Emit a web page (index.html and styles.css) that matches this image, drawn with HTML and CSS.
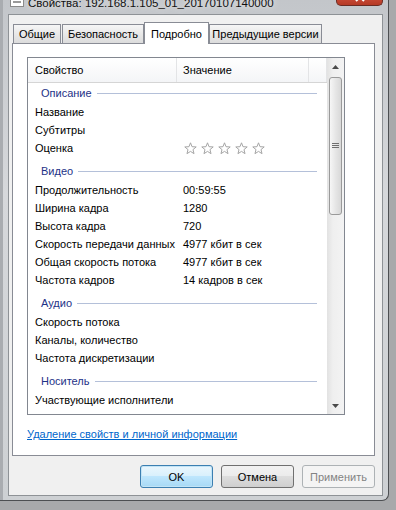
FILE: index.html
```html
<!DOCTYPE html>
<html lang="ru">
<head>
  <meta charset="UTF-8" />
  <title>Свойства</title>
  <link rel="stylesheet" href="styles.css">
</head>
<body>
  <div class="window">
    <div class="titlebar">
      <span class="app-icon">
        <svg width="14" height="16" viewBox="0 0 14 16">
          <rect x="0.5" y="0.5" width="13" height="15" fill="#fff" stroke="#8a8a8a"/>
          <rect x="1" y="1" width="12" height="6" fill="#e8872e"/>
          <rect x="3" y="10" width="8" height="2" fill="#9a9a9a"/>
        </svg>
      </span>
      <span class="title">Свойства: 192.168.1.105_01_20170107140000</span>
      <span class="close-btn">
        <svg width="10" height="9" viewBox="0 0 10 9">
          <path d="M1 0 L9 8 M9 0 L1 8" stroke="#fff" stroke-width="2"/>
        </svg>
      </span>
    </div>

    <div class="dialog">
      <div class="tabs">
        <div class="tab tab-general">Общие</div>
        <div class="tab tab-security">Безопасность</div>
        <div class="tab tab-details active">Подробно</div>
        <div class="tab tab-versions">Предыдущие версии</div>
      </div>

      <div class="panel">
        <div class="list">
          <div class="list-body">
            <div class="list-head">
              <div class="col-name">Свойство</div>
              <div class="col-value">Значение</div>
              <div class="col-rest"></div>
            </div>

            <div class="group">Описание</div>
            <div class="row"><div class="col-name">Название</div><div class="col-value"></div></div>
            <div class="row"><div class="col-name">Субтитры</div><div class="col-value"></div></div>
            <div class="row">
              <div class="col-name">Оценка</div>
              <div class="col-value stars">
                <svg width="13" height="13" viewBox="0 0 13 13"><polygon points="6.5,0.8 8.03,4.7 12.21,4.95 8.97,7.6 10.03,11.65 6.5,9.4 2.97,11.65 4.03,7.6 0.79,4.95 4.97,4.7"/></svg>
                <svg width="13" height="13" viewBox="0 0 13 13"><polygon points="6.5,0.8 8.03,4.7 12.21,4.95 8.97,7.6 10.03,11.65 6.5,9.4 2.97,11.65 4.03,7.6 0.79,4.95 4.97,4.7"/></svg>
                <svg width="13" height="13" viewBox="0 0 13 13"><polygon points="6.5,0.8 8.03,4.7 12.21,4.95 8.97,7.6 10.03,11.65 6.5,9.4 2.97,11.65 4.03,7.6 0.79,4.95 4.97,4.7"/></svg>
                <svg width="13" height="13" viewBox="0 0 13 13"><polygon points="6.5,0.8 8.03,4.7 12.21,4.95 8.97,7.6 10.03,11.65 6.5,9.4 2.97,11.65 4.03,7.6 0.79,4.95 4.97,4.7"/></svg>
                <svg width="13" height="13" viewBox="0 0 13 13"><polygon points="6.5,0.8 8.03,4.7 12.21,4.95 8.97,7.6 10.03,11.65 6.5,9.4 2.97,11.65 4.03,7.6 0.79,4.95 4.97,4.7"/></svg>
              </div>
            </div>

            <div class="group">Видео</div>
            <div class="row"><div class="col-name">Продолжительность</div><div class="col-value">00:59:55</div></div>
            <div class="row"><div class="col-name">Ширина кадра</div><div class="col-value">1280</div></div>
            <div class="row"><div class="col-name">Высота кадра</div><div class="col-value">720</div></div>
            <div class="row"><div class="col-name">Скорость передачи данных</div><div class="col-value">4977 кбит в сек</div></div>
            <div class="row"><div class="col-name">Общая скорость потока</div><div class="col-value">4977 кбит в сек</div></div>
            <div class="row"><div class="col-name">Частота кадров</div><div class="col-value">14 кадров в сек</div></div>

            <div class="group">Аудио</div>
            <div class="row"><div class="col-name">Скорость потока</div><div class="col-value"></div></div>
            <div class="row"><div class="col-name">Каналы, количество</div><div class="col-value"></div></div>
            <div class="row"><div class="col-name">Частота дискретизации</div><div class="col-value"></div></div>

            <div class="group">Носитель</div>
            <div class="row"><div class="col-name">Участвующие исполнители</div><div class="col-value"></div></div>
          </div>

          <div class="scrollbar">
            <div class="sb-arrow">
              <svg width="7" height="4" viewBox="0 0 7 4"><polygon points="3.5,0 7,4 0,4" fill="#4a4a4a"/></svg>
            </div>
            <div class="sb-thumb">
              <svg width="7" height="6" viewBox="0 0 7 6">
                <path d="M0 0.5 H7 M0 2.5 H7 M0 4.5 H7" stroke="#6e6e6e" stroke-width="1"/>
              </svg>
            </div>
            <div class="sb-track"></div>
            <div class="sb-arrow">
              <svg width="7" height="4" viewBox="0 0 7 4"><polygon points="0,0 7,0 3.5,4" fill="#4a4a4a"/></svg>
            </div>
          </div>
        </div>

        <a class="remove-link" href="#">Удаление свойств и личной информации</a>
      </div>

      <div class="buttons">
        <button class="btn btn-default">OK</button>
        <button class="btn">Отмена</button>
        <button class="btn" disabled>Применить</button>
      </div>
    </div>
  </div>
</body>
</html>
```

FILE: styles.css
```css
body {
  margin: 0;
  background: #a8a9ab;
  font-family: "Liberation Sans", Arial, sans-serif;
  font-size: 11px;
  color: #000;
  overflow: hidden;
}

.window {
  width: 375px;
  margin-top: -10px;
  padding: 0 5px 4px 8px;
  border-right: 1px solid #4d4f52;
  border-bottom: 1px solid #4d4f52;
  border-bottom-right-radius: 7px;
  background: linear-gradient(to bottom, #c2c5c9, #d6d8db 40%, #cdd0d3);
  box-shadow: inset 3px 0 0 #a9acb0;
}

/* title bar */
.titlebar {
  height: 24px;
  display: flex;
  align-items: flex-start;
}
.app-icon {
  margin: 1px 0 0 2px;
  height: 16px;
}
.title {
  margin-left: 4px;
  padding-top: 6px;
  line-height: 14px;
  font-size: 11.5px;
  color: #111;
  text-shadow: 0 0 6px #fff;
}
.close-btn {
  margin-left: auto;
  width: 47px;
  height: 16px;
  display: flex;
  align-items: center;
  justify-content: center;
  border: 1px solid #6b2b22;
  border-top: none;
  border-radius: 0 0 5px 5px;
  background: linear-gradient(to bottom, #d26a55, #c84a35 55%, #b53a26);
  box-sizing: border-box;
}

/* dialog body */
.dialog {
  border: 1px solid #8e9296;
  background: #f0f0f0;
  padding: 7px 7px 7px 3px;
}

.tabs {
  display: flex;
  align-items: flex-end;
  height: 21px;
  margin-left: 1px;
}
.tab {
  height: 18px;
  line-height: 19px;
  box-sizing: content-box;
  text-align: center;
  border: 1px solid #898c95;
  border-bottom: none;
  background: linear-gradient(to bottom, #f6f6f6, #e8e8e8 50%, #dcdcdc);
}
.tab-general {
  width: 46px;
  margin-right: 1px;
}
.tab-security {
  width: 80px;
}
.tab-details {
  width: 63px;
}
.tab-versions {
  width: 111px;
}
.tab.active {
  height: 21px;
  line-height: 22px;
  margin-bottom: -1px;
  background: #fff;
  position: relative;
  z-index: 1;
}

.panel {
  width: 363px;
  height: 413px;
  box-sizing: border-box;
  border: 1px solid #898c95;
  background: #fff;
  padding: 13px 0 0 14px;
}

/* property list */
.list {
  width: 318px;
  height: 358px;
  box-sizing: border-box;
  border: 1px solid #828790;
  display: flex;
}
.list-body {
  flex: 1;
  overflow: hidden;
  white-space: nowrap;
}
.list-head {
  display: flex;
  height: 24px;
  line-height: 25px;
  border-bottom: 1px solid #d5d5d5;
  background: linear-gradient(to bottom, #ffffff, #f4f5f7);
}
.list-head > div {
  border-right: 1px solid #e3e4e6;
}
.col-name {
  flex: none;
  width: 149px;
  box-sizing: border-box;
  padding-left: 7px;
}
.col-value {
  flex: none;
  width: 132px;
  box-sizing: border-box;
  padding-left: 6px;
}
.col-rest {
  flex: 1;
}

.group {
  display: flex;
  align-items: center;
  height: 20px;
  line-height: 21px;
  margin: 4px 10px 0 0;
  padding-left: 13px;
  color: #1e3287;
}
.list-head + .group {
  margin-top: 0;
}
.group::after {
  content: "";
  flex: 1;
  height: 1px;
  margin-left: 5px;
  background: #b4c0d9;
}

.row {
  display: flex;
  height: 18px;
  line-height: 19px;
}

.stars {
  display: flex;
  align-items: center;
  gap: 4px;
  padding-left: 7px;
}
.stars polygon {
  fill: #fff;
  stroke: #a5a5a5;
  stroke-width: 1;
  stroke-linejoin: round;
}

/* scrollbar */
.scrollbar {
  width: 17px;
  display: flex;
  flex-direction: column;
  background: linear-gradient(to right, #e2e2e2, #efefef 35%, #f3f3f3);
}
.sb-arrow {
  height: 17px;
  display: flex;
  align-items: center;
  justify-content: center;
}
.sb-thumb {
  height: 136px;
  margin: 2px 2px 0;
  border: 1px solid #9a9a9a;
  border-radius: 3px;
  background: linear-gradient(to right, #f6f6f6, #e6e6e6 50%, #d8d8d8);
  display: flex;
  align-items: center;
  justify-content: center;
}
.sb-track {
  flex: 1;
}

.remove-link {
  display: inline-block;
  margin-top: 12px;
  line-height: 15px;
  color: #0066cc;
  text-decoration: underline;
}

/* buttons */
.buttons {
  display: flex;
  justify-content: flex-end;
  gap: 8px;
  margin-top: 9px;
}
.btn {
  width: 73px;
  height: 23px;
  padding: 0;
  border: 1px solid #707070;
  border-radius: 3px;
  font-family: "Liberation Sans", Arial, sans-serif;
  font-size: 11px;
  color: #000;
  background: linear-gradient(to bottom, #f2f2f2, #ebebeb 48%, #dddddd 50%, #cfcfcf);
}
.btn-default {
  border-color: #3c7fb1;
  background: linear-gradient(to bottom, #eaf6fd, #d9f0fc 48%, #bee6fd 50%, #a7d9f5);
  box-shadow: inset 0 0 0 1px #c2e4f6;
}
.btn:disabled {
  border-color: #adb2b5;
  background: #f4f4f4;
  color: #838383;
}
```
